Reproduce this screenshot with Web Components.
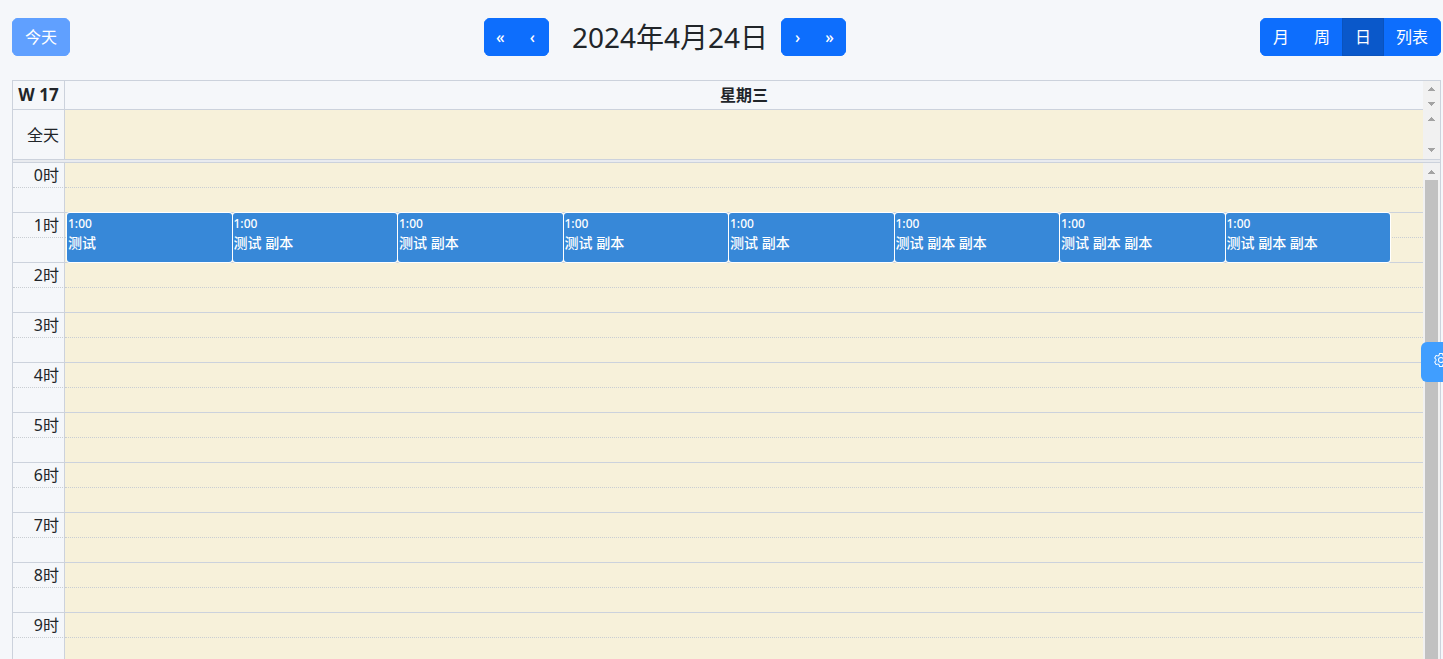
<!DOCTYPE html>
<html lang="zh-CN">
<head>
<meta charset="utf-8">
<title>日历</title>
<style>
html, body { height: 100%; margin: 0; }
body {
  background: #f5f7fa;
  color: #212529;
  font: 16px/24px "Noto Sans", "Noto Sans CJK SC", sans-serif;
  overflow: hidden;
}
</style>
</head>
<body>
<cal-app>
  <cal-toolbar slot="toolbar" date="2024年4月24日"></cal-toolbar>
  <cal-day week="W 17" day="星期三" hours="10">
    <cal-event time="1:00">测试</cal-event>
    <cal-event time="1:00">测试 副本</cal-event>
    <cal-event time="1:00">测试 副本</cal-event>
    <cal-event time="1:00">测试 副本</cal-event>
    <cal-event time="1:00">测试 副本</cal-event>
    <cal-event time="1:00">测试 副本 副本</cal-event>
    <cal-event time="1:00">测试 副本 副本</cal-event>
    <cal-event time="1:00">测试 副本 副本</cal-event>
  </cal-day>
</cal-app>
<cal-settings></cal-settings>
<script>
function define(name, render) {
  customElements.define(name, class extends HTMLElement {
    constructor() {
      super();
      this.attachShadow({ mode: 'open' });
    }
    connectedCallback() {
      this.shadowRoot.innerHTML = render(this);
    }
  });
}

define('cal-app', () => `
<style>
:host { display: flex; flex-direction: column; gap: 24px; box-sizing: border-box; height: 100vh; padding: 18px 2px 0 12px; }
::slotted(cal-day) { flex: 1; min-height: 0; }
</style>
<slot name="toolbar"></slot><slot></slot>`);

define('cal-button', el => `
<style>
:host { display: block; }
button {
  display: block; height: 38px; min-width: 33px; padding: 0 12px; border: 1px solid #0d6efd;
  background: #0d6efd; color: #fff; font: inherit; cursor: pointer;
}
button[aria-label] { padding: 0; font-weight: 500; }
:host([active]) { position: relative; }
:host([active]) button { background: #0a58ca; border-color: #0a53be; }
:host([muted]) button { background: #60a0ff; border-color: #60a0ff; }
</style>
<button type="button" ${el.hasAttribute('label') ? `aria-label="${el.getAttribute('label')}"` : ''}><slot></slot></button>`);

define('cal-group', () => `
<style>
:host { display: flex; border-radius: 6px; overflow: hidden; }
::slotted(cal-button:not(:first-child)) { margin-left: -1px; }
</style>
<slot></slot>`);

define('cal-toolbar', el => `
<style>
:host { display: flex; justify-content: space-between; align-items: center; }
.center { display: flex; align-items: center; }
h2 { margin: 0 13px 0 23px; font-size: 28px; line-height: 34px; font-weight: 400; }
</style>
<cal-group><cal-button muted>今天</cal-button></cal-group>
<div class="center">
  <cal-group><cal-button label="上一年">«</cal-button><cal-button label="上一天">‹</cal-button></cal-group>
  <h2>${el.getAttribute('date')}</h2>
  <cal-group><cal-button label="下一天">›</cal-button><cal-button label="下一年">»</cal-button></cal-group>
</div>
<cal-group><cal-button>月</cal-button><cal-button>周</cal-button><cal-button active>日</cal-button><cal-button>列表</cal-button></cal-group>`);

define('cal-scrollbar', () => `
<style>
:host { display: flex; flex-direction: column; justify-content: space-between; align-items: center; width: 17px; box-sizing: border-box; padding: 7px 0; background: #f1f1f1; }
:host([compact]) { padding: 6px 0 4px; }
svg { display: block; flex: none; width: 7px; height: 4px; fill: #a3a3a3; }
i { flex: 1; width: 13px; margin-top: 6px; background: #c1c1c1; }
:host([thumb]) { padding-bottom: 0; }
:host([thumb]) .down, :host(:not([thumb])) i { display: none; }
</style>
<svg viewBox="0 0 7 4"><path d="M3 0h1v1h1v1h1v1h1v1H0V3h1V2h1V1h1z"/></svg>
<i></i>
<svg class="down" viewBox="0 0 7 4"><path d="M0 0h7v1H6v1H5v1H4v1H3V3H2V2H1V1H0z"/></svg>`);

define('cal-event', el => `
<style>
:host { display: block; flex: 1; min-width: 0; box-sizing: border-box; padding: 2px 1px; border-radius: 3px; background: #3788d8; color: #fff; box-shadow: 0 0 0 1px #fff; font-size: 14px; line-height: 20px; }
time { display: block; font-size: 12px; line-height: 18px; font-weight: 500; }
div { font-weight: 500; white-space: nowrap; overflow: hidden; }
</style>
<time>${el.getAttribute('time')}</time><div><slot></slot></div>`);

define('cal-day', el => `
<style>
:host { display: flex; flex-direction: column; border: 1px solid #ccd2dc; border-bottom: 0; overflow: hidden; }
.band { display: flex; flex: none; }
.band table { flex: 1; }
table { width: 100%; border-collapse: separate; border-spacing: 0; table-layout: fixed; }
th, td { padding: 0; }
.axis { width: 51px; border-right: 1px solid #ccd2dc; }
.head th { height: 28px; border-bottom: 1px solid #ccd2dc; font-weight: 700; }
.head .axis { font-size: 17px; }
.allday th { height: 49px; font-weight: 400; text-align: right; }
.allday .axis { box-sizing: content-box; width: 46px; padding-right: 5px; }
.today { background: #f7f1da; }
.divider { flex: none; height: 2px; border: solid #ccd2dc; border-width: 1px 0; background: #e9ebef; }
.body { display: flex; flex: 1; min-height: 0; overflow: hidden; }
.grid { position: relative; flex: 1; min-width: 0; }
.grid th, .grid td { height: 24px; line-height: 24px; border-bottom: 1px solid #ccd2dc; }
.grid th { width: 46px; padding-right: 5px; font-weight: 400; text-align: right; }
.grid .half > * { border-bottom: 1px dotted #c9ced3; }
.events { position: absolute; top: 50px; left: 52px; right: 0; height: 49px; display: flex; gap: 1px; padding: 0 33px 0 2px; }
</style>
<div class="band head">
  <table><tr><th class="axis">${el.getAttribute('week')}</th><th>${el.getAttribute('day')}</th></tr></table>
  <cal-scrollbar compact></cal-scrollbar>
</div>
<div class="band allday">
  <table><tr><th class="axis">全天</th><td class="today"></td></tr></table>
  <cal-scrollbar></cal-scrollbar>
</div>
<div class="divider"></div>
<div class="body">
  <div class="grid">
    <table>${Array.from({ length: Number(el.getAttribute('hours')) }, (_, h) => `
      <tr class="half"><th class="axis">${h}时</th><td class="today"></td></tr>
      <tr><th class="axis"></th><td class="today"></td></tr>`).join('')}
    </table>
    <div class="events"><slot></slot></div>
  </div>
  <cal-scrollbar thumb></cal-scrollbar>
</div>`);

define('cal-settings', () => `
<style>
:host { position: fixed; right: 0; top: 342px; width: 22px; height: 40px; overflow: hidden; border-radius: 6px 0 0 6px; }
button { display: block; width: 40px; height: 40px; padding: 0 0 4px 12px; border: 0; background: #409eff; cursor: pointer; }
svg { display: block; width: 16px; height: 16px; fill: #fff; }
</style>
<button type="button" aria-label="设置"><svg viewBox="0 0 1024 1024"><path d="M600.704 64a32 32 0 0 1 30.464 22.208l35.2 109.376c14.784 7.232 28.928 15.36 42.432 24.512l112.384-24.192a32 32 0 0 1 34.432 15.36L944.32 364.8a32 32 0 0 1-4.032 37.504l-77.12 85.12a357.12 357.12 0 0 1 0 49.024l77.12 85.248a32 32 0 0 1 4.032 37.504l-88.704 153.6a32 32 0 0 1-34.432 15.296L708.8 803.904c-13.44 9.088-27.648 17.28-42.368 24.512l-35.264 109.376A32 32 0 0 1 600.704 960H423.296a32 32 0 0 1-30.464-22.208L357.696 828.48a351.616 351.616 0 0 1-42.56-24.64l-112.32 24.256a32 32 0 0 1-34.432-15.36L79.68 659.2a32 32 0 0 1 4.032-37.504l77.12-85.248a357.12 357.12 0 0 1 0-48.896l-77.12-85.248A32 32 0 0 1 79.68 364.8l88.704-153.6a32 32 0 0 1 34.432-15.296l112.32 24.256c13.568-9.152 27.776-17.408 42.56-24.64l35.2-109.312A32 32 0 0 1 423.232 64H600.64zm-23.424 64H446.72l-36.352 113.088-24.512 11.968a294.113 294.113 0 0 0-34.816 20.096l-22.656 15.36-116.224-25.088-65.28 113.152 79.68 88.192-1.92 27.136a293.12 293.12 0 0 0 0 40.192l1.92 27.136-79.808 88.192 65.344 113.152 116.224-25.024 22.656 15.296a294.113 294.113 0 0 0 34.816 20.096l24.512 11.968L446.72 896h130.688l36.48-113.152 24.448-11.904a288.282 288.282 0 0 0 34.752-20.096l22.592-15.296 116.288 25.024 65.28-113.152-79.744-88.192 1.92-27.136a293.12 293.12 0 0 0 0-40.256l-1.92-27.136 79.808-88.128-65.344-113.152-116.288 24.96-22.592-15.232a287.616 287.616 0 0 0-34.752-20.096l-24.448-11.904L577.344 128zM512 320a192 192 0 1 1 0 384 192 192 0 0 1 0-384zm0 64a128 128 0 1 0 0 256 128 128 0 0 0 0-256z"/></svg></button>`);
</script>
</body>
</html>
